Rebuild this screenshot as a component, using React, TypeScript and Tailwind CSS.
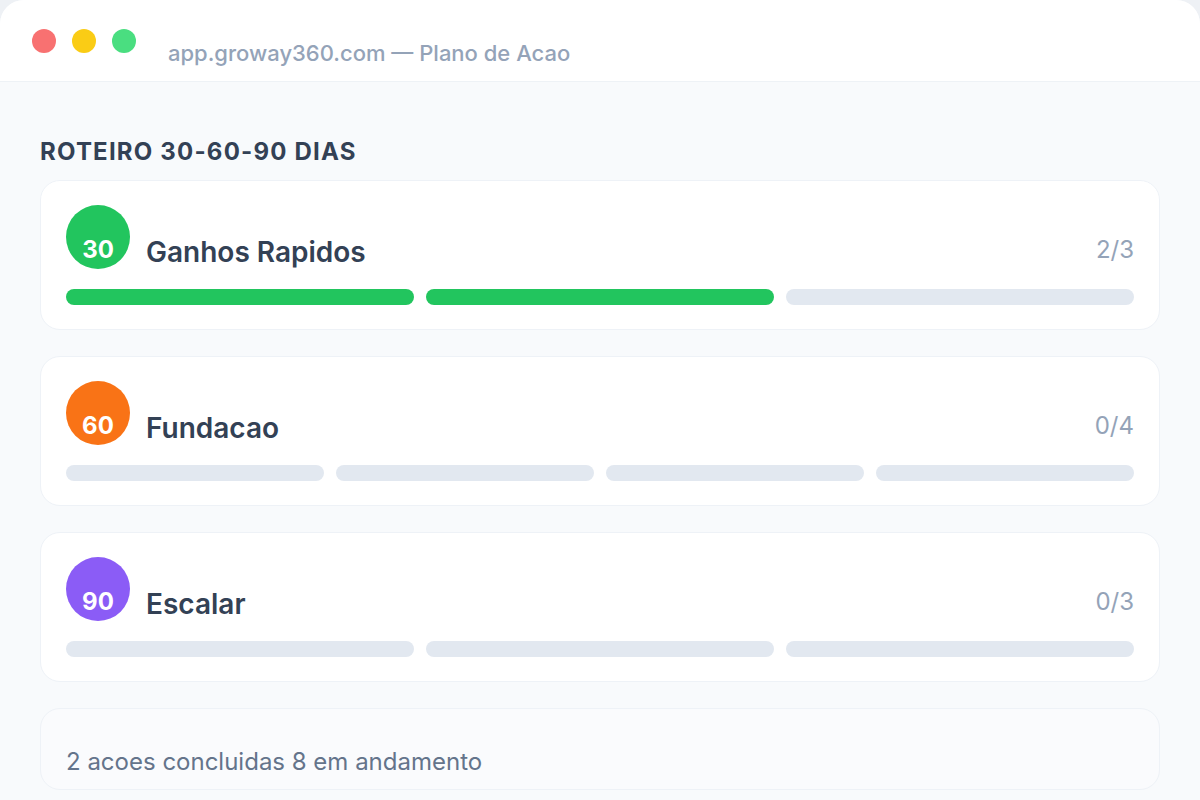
const phases = [
  { num: '30', title: 'Ganhos Rapidos', color: 'bg-[#22c55e]', done: 2, total: 3 },
  { num: '60', title: 'Fundacao', color: 'bg-[#f97316]', done: 0, total: 4 },
  { num: '90', title: 'Escalar', color: 'bg-[#8b5cf6]', done: 0, total: 3 },
];

function PhaseCard({ num, title, color, done, total }: (typeof phases)[number]) {
  return (
    <div className="bg-white border border-[#eef2f7] rounded-[20px] px-[25px] py-[24px]">
      <div className="flex items-start h-16">
        <div className={`w-16 h-16 rounded-full ${color} flex justify-center shrink-0`}>
          <span className="mt-[31px] text-[24px] leading-[28px] font-bold text-white">{num}</span>
        </div>
        <span className="ml-4 mt-[31px] text-[28px] leading-[32px] font-semibold text-[#334155]">{title}</span>
        <span className="ml-auto mt-[31px] text-[24px] leading-[28px] text-[#94a3b8]">
          {done}/{total}
        </span>
      </div>
      <div className="flex gap-3 mt-5">
        {Array.from({ length: total }).map((_, i) => (
          <div
            key={i}
            className={`flex-1 h-4 rounded-full ${i < done ? 'bg-[#22c55e]' : 'bg-[#e2e8f0]'}`}
          />
        ))}
      </div>
    </div>
  );
}

export default function App() {
  return (
    <div className="min-h-screen bg-[#eef1f5]" style={{ fontFamily: 'Inter, "Noto Sans", sans-serif' }}>
      <div className="h-[800px] rounded-t-[24px] bg-[#f8fafc] overflow-hidden flex flex-col">
        <div className="h-[82px] shrink-0 bg-white border-b border-[#eef2f6] flex items-start pl-8 pt-[29px]">
          <div className="flex gap-4">
            <div className="w-6 h-6 rounded-full bg-[#f87171]" />
            <div className="w-6 h-6 rounded-full bg-[#facc15]" />
            <div className="w-6 h-6 rounded-full bg-[#4ade80]" />
          </div>
          <span className="ml-8 mt-[12px] text-[22px] leading-6 font-medium text-[#94a3b8]">
            app.groway360.com — Plano de Acao
          </span>
        </div>

        <div className="px-10 pt-[56px]">
          <h2 className="text-[24px] leading-[28px] font-bold tracking-[0.05em] text-[#334155] mb-[14px]">
            ROTEIRO 30-60-90 DIAS
          </h2>
          <div className="flex flex-col gap-[26px]">
            {phases.map((p) => (
              <PhaseCard key={p.num} {...p} />
            ))}
            <div className="bg-[#fafbfd] border border-[#eef2f7] rounded-[20px] px-[25px] pt-[39px] pb-[13px]">
              <span className="text-[24px] leading-[28px] text-[#64748b]">
                2 acoes concluidas 8 em andamento
              </span>
            </div>
          </div>
        </div>
      </div>
    </div>
  );
}
